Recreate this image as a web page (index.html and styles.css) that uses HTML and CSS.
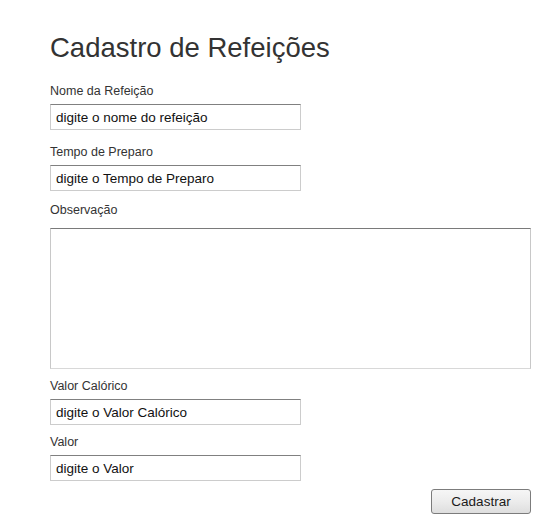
FILE: index.html
```html
<!DOCTYPE html>
<html lang="pt-BR">
<head>
<meta charset="utf-8">
<title>Cadastro de Refeições</title>
<link rel="stylesheet" href="styles.css">
</head>
<body>
<main class="page">
  <h1 class="title">Cadastro de Refeições</h1>
  <form class="form">
    <div class="field field--gap-lg">
      <label class="label" for="nome">Nome da Refeição</label>
      <input class="input" id="nome" type="text" value="digite o nome do refeição">
    </div>
    <div class="field field--gap-md">
      <label class="label" for="tempo">Tempo de Preparo</label>
      <input class="input" id="tempo" type="text" value="digite o Tempo de Preparo">
    </div>
    <div class="field">
      <label class="label" for="obs">Observação</label>
      <textarea class="textarea" id="obs"></textarea>
    </div>
    <div class="field">
      <label class="label" for="cal">Valor Calórico</label>
      <input class="input" id="cal" type="text" value="digite o Valor Calórico">
    </div>
    <div class="field field--gap-sm">
      <label class="label" for="valor">Valor</label>
      <input class="input" id="valor" type="text" value="digite o Valor">
    </div>
    <div class="actions">
      <button class="btn" type="button">Cadastrar</button>
    </div>
  </form>
</main>
</body>
</html>
```

FILE: styles.css
```css
html, body {
  margin: 0;
  padding: 0;
  background: #ffffff;
}

body {
  font-family: "Liberation Sans", Arial, Helvetica, sans-serif;
  color: #333333;
}

.page {
  padding: 32px 0 0 50px;
  width: 481px;
}

.title {
  margin: 0;
  font-size: 27.5px;
  line-height: 32px;
  font-weight: normal;
  color: #333333;
}

.form {
  margin-top: 20px;
  display: flex;
  flex-direction: column;
}

.field {
  display: flex;
  flex-direction: column;
  align-items: flex-start;
  margin-bottom: 10px;
}

.field--gap-lg {
  margin-bottom: 15px;
}

.field--gap-md {
  margin-bottom: 12px;
}

.field--gap-sm {
  margin-bottom: 8px;
}

.label {
  display: block;
  font-size: 12.5px;
  line-height: 15px;
  color: #333333;
  margin-bottom: 5px;
}

.input {
  box-sizing: border-box;
  width: 251px;
  height: 26px;
  margin: 0;
  padding: 0 5px;
  font-family: "Liberation Sans", Arial, Helvetica, sans-serif;
  font-size: 13.5px;
  color: #111111;
  background: #ffffff;
  border: 1px solid #cccccc;
  border-top-color: #808080;
  border-radius: 0;
  outline: none;
}

.textarea {
  box-sizing: border-box;
  display: block;
  width: 481px;
  height: 141px;
  margin: 5px 0 0 0;
  padding: 4px 5px;
  font-family: "Liberation Sans", Arial, Helvetica, sans-serif;
  font-size: 13.5px;
  background: #ffffff;
  border: 1px solid #c8c8c8;
  border-top-color: #7a7a7a;
  border-bottom-color: #d8d8d8;
  border-radius: 0;
  resize: none;
  outline: none;
}

.actions {
  display: flex;
  justify-content: flex-end;
}

.btn {
  box-sizing: border-box;
  width: 100px;
  height: 25px;
  margin: 0;
  padding: 0;
  font-family: "Liberation Sans", Arial, Helvetica, sans-serif;
  font-size: 13.5px;
  color: #1a1a1a;
  background: linear-gradient(to bottom, #f6f6f6 0%, #ececec 50%, #dedede 100%);
  border: 1px solid #7c7c7c;
  border-radius: 3px;
}
```
